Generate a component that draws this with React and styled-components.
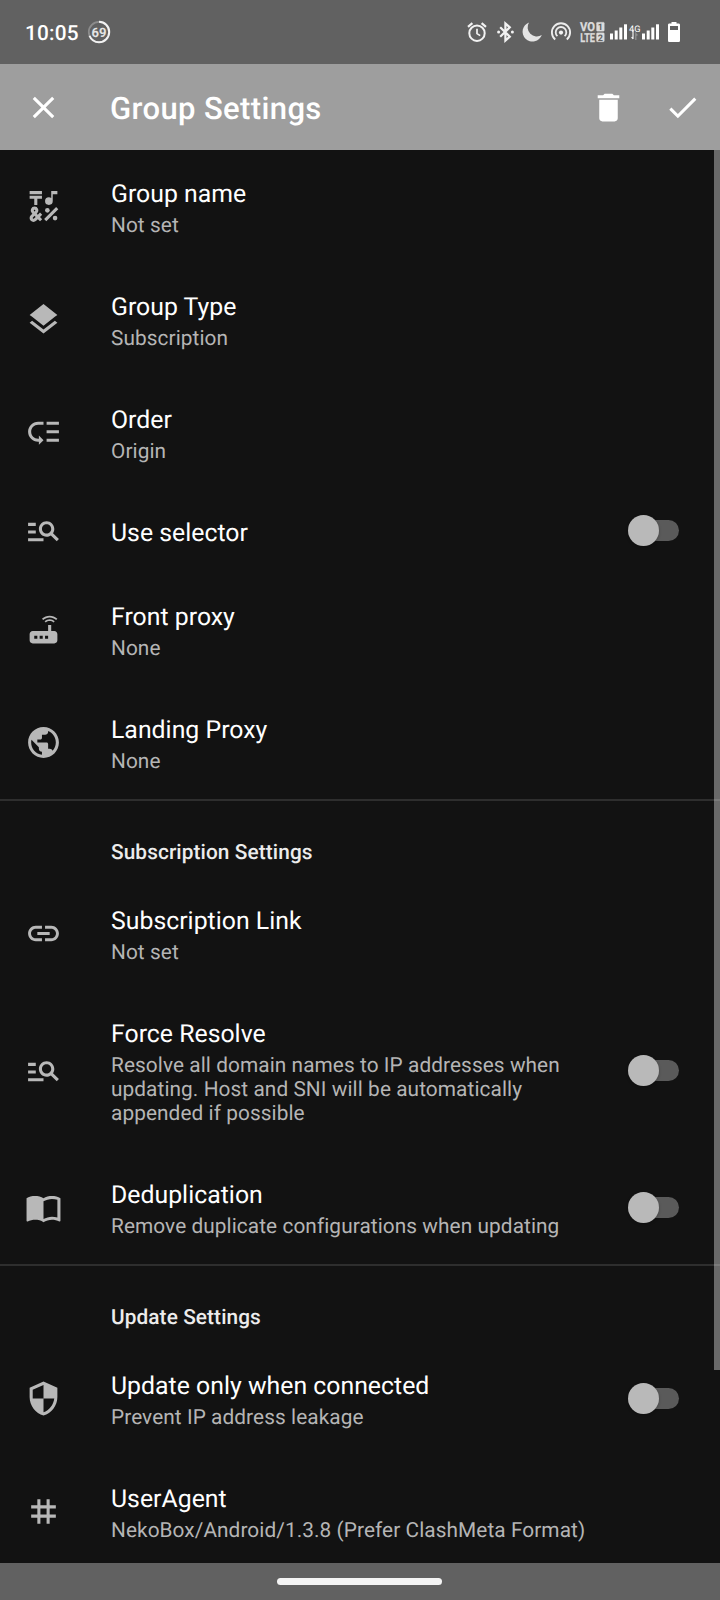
import React from "react";
import styled, { createGlobalStyle } from "styled-components";
import {
  MdCheck,
  MdClose,
  MdDelete,
  MdEmojiSymbols,
  MdImportContacts,
  MdLayers,
  MdLink,
  MdLowPriority,
  MdManageSearch,
  MdPublic,
  MdRouter,
  MdSecurity,
  MdTag,
} from "react-icons/md";

const GlobalStyle = createGlobalStyle`
  *, *::before, *::after { box-sizing: border-box; }
  body {
    margin: 0;
    background: #121212;
    font-family: Roboto, "Liberation Sans", sans-serif;
    text-rendering: geometricPrecision;
  }
`;

const Screen = styled.div`
  width: 720px;
  height: 1600px;
  display: flex;
  flex-direction: column;
  overflow: hidden;
  background: #121212;
  color: #fff;
`;

const StatusBar = styled.header`
  height: 64px;
  flex: none;
  display: flex;
  align-items: center;
  padding: 0 40px 0 25px;
  background: #616161;
`;

const Clock = styled.span`
  width: 62px;
  font-size: 20.8px;
  font-weight: 500;
  letter-spacing: 0.2px;
  line-height: 24px;
  padding-top: 3px;
`;

const StatusIcons = styled.div`
  margin-left: auto;
  display: flex;
  align-items: center;
`;

const StatusIcon = styled.svg`
  display: block;
  flex: none;
  overflow: visible;
  margin-left: ${(p) => p.$gap || 0}px;
`;

const AppBar = styled.nav`
  height: 86px;
  flex: none;
  display: flex;
  align-items: center;
  padding: 0 19px 0 25px;
  background: #9e9e9e;
`;

const BarButton = styled.button`
  display: flex;
  padding: 0;
  border: 0;
  background: none;
  color: #fff;
  font-size: 37px;
  margin-left: ${(p) => p.$gap || 0}px;
`;

const BarTitle = styled.h1`
  flex: 1;
  margin: 0;
  padding: 3px 0 0 48px;
  font-size: 31px;
  font-weight: 500;
  letter-spacing: 0.38px;
  line-height: 38px;
`;

const Content = styled.main`
  position: relative;
  flex: 1;
  min-height: 0;
  overflow: hidden;
`;

const ScrollThumb = styled.div`
  position: absolute;
  top: 0;
  right: 0;
  width: 6px;
  height: 1220px;
  background: rgba(255, 255, 255, 0.37);
`;

const Section = styled.section`
  & + & {
    box-shadow: inset 0 2px #2e2e2e;
  }
`;

const Category = styled.h2`
  margin: 0;
  height: 78px;
  padding: 42px 0 0 111px;
  font-size: 20.8px;
  font-weight: 500;
  letter-spacing: 0.1px;
  line-height: 24px;
  color: #ececec;
`;

const Row = styled.div`
  display: flex;
  align-items: center;
  padding-right: 41px;
`;

const RowIcon = styled.div`
  width: 111px;
  flex: none;
  display: flex;
  margin-bottom: 0.2px;
  padding-left: 25px;
  font-size: 37px;
  color: #b8b8b8;
`;

const RowText = styled.div`
  flex: 1;
  padding: 30px 40px 25px 0;
`;

const RowTitle = styled.div`
  font-size: 24.8px;
  letter-spacing: 0.02px;
  line-height: 29px;
`;

const Summary = styled.div`
  margin-top: 5px;
  font-size: 20.8px;
  letter-spacing: 0.08px;
  line-height: 24px;
  color: #b5b5b5;
`;

const Track = styled.div`
  width: 47px;
  height: 21px;
  flex: none;
  display: flex;
  align-items: center;
  margin-bottom: 0.2px;
  border-radius: 11px;
  background: #5a5a5a;
`;

const Thumb = styled.div`
  width: 31px;
  height: 31px;
  flex: none;
  margin-left: -4px;
  border-radius: 50%;
  background: #b9b9b9;
  box-shadow: 0 1px 3px rgba(0, 0, 0, 0.25);
`;

const NavigationBar = styled.footer`
  height: 37px;
  flex: none;
  display: flex;
  justify-content: center;
  align-items: center;
  padding-right: 1px;
  background: #616161;
`;

const HomePill = styled.div`
  width: 165px;
  height: 7px;
  border-radius: 4px;
  background: #f4f4f4;
`;

const sections = [
  {
    rows: [
      { icon: MdEmojiSymbols, title: "Group name", summary: "Not set" },
      { icon: MdLayers, title: "Group Type", summary: "Subscription" },
      { icon: MdLowPriority, title: "Order", summary: "Origin" },
      { icon: MdManageSearch, title: "Use selector", toggle: true },
      { icon: MdRouter, title: "Front proxy", summary: "None" },
      { icon: MdPublic, title: "Landing Proxy", summary: "None" },
    ],
  },
  {
    heading: "Subscription Settings",
    rows: [
      { icon: MdLink, title: "Subscription Link", summary: "Not set" },
      {
        icon: MdManageSearch,
        title: "Force Resolve",
        summary:
          "Resolve all domain names to IP addresses when updating. Host and SNI will be automatically appended if possible",
        toggle: true,
      },
      {
        icon: MdImportContacts,
        title: "Deduplication",
        summary: "Remove duplicate configurations when updating",
        toggle: true,
      },
    ],
  },
  {
    heading: "Update Settings",
    rows: [
      {
        icon: MdSecurity,
        title: "Update only when connected",
        summary: "Prevent IP address leakage",
        toggle: true,
      },
      {
        icon: MdTag,
        title: "UserAgent",
        summary: "NekoBox/Android/1.3.8 (Prefer ClashMeta Format)",
      },
    ],
  },
];

function BatteryRing() {
  return (
    <StatusIcon width="24" height="24" viewBox="0 0 24 24" fill="none">
      <circle cx="12" cy="12" r="10.2" stroke="#8c8c8c" strokeWidth="1.8" />
      <circle
        cx="12"
        cy="12"
        r="10.2"
        stroke="#f2f2f2"
        strokeWidth="2"
        pathLength="100"
        strokeDasharray="69 31"
        transform="rotate(-90 12 12)"
      />
      <text x="12" y="16.6" fontSize="13" fontWeight="700" fill="#e4e4e4" textAnchor="middle">
        69
      </text>
    </StatusIcon>
  );
}

function AlarmIcon() {
  return (
    <StatusIcon width="20" height="20" viewBox="0 0 20 20" fill="none" stroke="#f2f2f2">
      <circle cx="10" cy="11.2" r="7.7" strokeWidth="2" />
      <path d="M10 6.8v4.8l3.2 2" strokeWidth="1.7" />
      <path d="M1 4.8l4.4-3.6M19 4.8l-4.4-3.6" strokeWidth="2.2" />
    </StatusIcon>
  );
}

function BluetoothIcon({ gap }) {
  return (
    <StatusIcon $gap={gap} width="17" height="20" viewBox="0 0 17 20" fill="none">
      <path d="M3.2 5.2l9.6 9.4-4.4 4V1.4l4.4 4-9.6 9.4" stroke="#f2f2f2" strokeWidth="2.2" />
      <circle cx="1.6" cy="10" r="1.5" fill="#f2f2f2" />
      <circle cx="15.4" cy="10" r="1.5" fill="#f2f2f2" />
    </StatusIcon>
  );
}

function MoonIcon({ gap }) {
  return (
    <StatusIcon $gap={gap} width="20" height="20" viewBox="0 0 20 20">
      <path d="M7 .4A9.9 9.9 0 1 0 19.8 13 9.2 9.2 0 0 1 7 .4z" fill="#e4e4e4" />
    </StatusIcon>
  );
}

function HotspotIcon({ gap }) {
  return (
    <StatusIcon $gap={gap} width="20" height="20" viewBox="0 0 20 20" fill="none" stroke="#ececec">
      <path d="M4.2 17.4a9.1 9.1 0 1 1 11.6 0" strokeWidth="1.9" />
      <path d="M6.4 14.2a5.3 5.3 0 1 1 7.2 0" strokeWidth="1.8" />
      <circle cx="10" cy="10.6" r="2.1" fill="#f2f2f2" stroke="none" />
    </StatusIcon>
  );
}

function VolteIcon({ gap }) {
  return (
    <StatusIcon $gap={gap} width="25" height="20" viewBox="0 0 25 20" fontWeight="700" fontSize="12.4">
      <g fill="#dcdcdc" stroke="#dcdcdc" strokeWidth="0.3">
        <text x="0" y="9.2" textLength="15" lengthAdjust="spacingAndGlyphs">VO</text>
        <text x="0.3" y="19.8" textLength="14.7" lengthAdjust="spacingAndGlyphs">LTE</text>
        <rect x="16.5" y="0.2" width="7.8" height="9" rx="1" />
        <rect x="16.5" y="10.8" width="7.8" height="9" rx="1" />
      </g>
      <g fill="#616161" fontSize="9" textAnchor="middle">
        <text x="20.4" y="7.9">1</text>
        <text x="20.4" y="18.5">2</text>
      </g>
    </StatusIcon>
  );
}

function SignalIcon({ gap }) {
  return (
    <StatusIcon $gap={gap} width="17" height="16" viewBox="0 0 17 16" fill="#fff">
      <rect x="0" y="9.5" width="3" height="6" />
      <rect x="4.7" y="6.5" width="3" height="9" />
      <rect x="9.3" y="3.5" width="3" height="12" />
      <rect x="14" y="0.3" width="3" height="15.2" />
    </StatusIcon>
  );
}

function MobileDataIcon({ gap }) {
  return (
    <StatusIcon $gap={gap} width="12" height="16" viewBox="0 0 12 16">
      <text x="0" y="7.5" fontSize="9" fill="#fff" textLength="11.5" lengthAdjust="spacingAndGlyphs">
        4G
      </text>
      <path d="M4 6v9M2.6 13l1.4 2" stroke="#f2f2f2" strokeWidth="1.2" fill="none" />
      <path d="M6.8 16V9.5l1.6 2" stroke="#8f8f8f" strokeWidth="1.3" fill="none" />
    </StatusIcon>
  );
}

function BatteryIcon({ gap }) {
  return (
    <StatusIcon $gap={gap} width="12" height="20" viewBox="0 0 12 20">
      <path
        d="M3.5 0h5v1.6h2.1c.8 0 1.4.6 1.4 1.4v15.4c0 .9-.7 1.6-1.6 1.6H1.6C.7 20 0 19.3 0 18.4V3c0-.8.6-1.4 1.4-1.4h2.1zM2 4v4h8V4z"
        fill="#fff"
        fillRule="evenodd"
      />
    </StatusIcon>
  );
}

function Switch() {
  return (
    <Track role="switch" aria-checked="false">
      <Thumb />
    </Track>
  );
}

function Preference({ icon: Icon, title, summary, toggle }) {
  return (
    <Row>
      <RowIcon>
        <Icon />
      </RowIcon>
      <RowText>
        <RowTitle>{title}</RowTitle>
        {summary && <Summary>{summary}</Summary>}
      </RowText>
      {toggle && <Switch />}
    </Row>
  );
}

export default function App() {
  return (
    <Screen>
      <GlobalStyle />
      <StatusBar>
        <Clock>10:05</Clock>
        <BatteryRing />
        <StatusIcons>
          <AlarmIcon />
          <BluetoothIcon gap={10} />
          <MoonIcon gap={8} />
          <HotspotIcon gap={9} />
          <VolteIcon gap={9} />
          <SignalIcon gap={5} />
          <MobileDataIcon gap={2} />
          <SignalIcon gap={1} />
          <BatteryIcon gap={9} />
        </StatusIcons>
      </StatusBar>
      <AppBar>
        <BarButton aria-label="Close">
          <MdClose />
        </BarButton>
        <BarTitle>Group Settings</BarTitle>
        <BarButton aria-label="Delete">
          <MdDelete />
        </BarButton>
        <BarButton aria-label="Apply" $gap={37}>
          <MdCheck />
        </BarButton>
      </AppBar>
      <Content>
        {sections.map(({ heading, rows }) => (
          <Section key={heading || "General"}>
            {heading && <Category>{heading}</Category>}
            {rows.map((row) => (
              <Preference key={row.title} {...row} />
            ))}
          </Section>
        ))}
        <ScrollThumb />
      </Content>
      <NavigationBar>
        <HomePill />
      </NavigationBar>
    </Screen>
  );
}
